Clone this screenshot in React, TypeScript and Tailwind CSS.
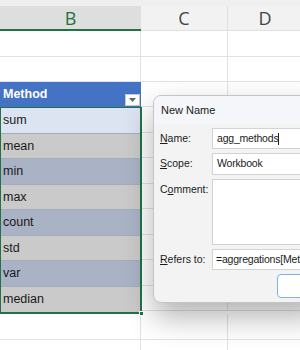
import React from 'react';

const ROWS: { label: string; bg: string; h: string }[] = [
  { label: 'sum', bg: 'bg-[#dce3f1]', h: 'h-[26px]' },
  { label: 'mean', bg: 'bg-[#cacaca]', h: 'h-[25px]' },
  { label: 'min', bg: 'bg-[#a9b3c5]', h: 'h-[26px]' },
  { label: 'max', bg: 'bg-[#cacaca]', h: 'h-[25px]' },
  { label: 'count', bg: 'bg-[#a9b3c5]', h: 'h-[26px]' },
  { label: 'std', bg: 'bg-[#cacaca]', h: 'h-[25px]' },
  { label: 'var', bg: 'bg-[#a9b3c5]', h: 'h-[26px]' },
  { label: 'median', bg: 'bg-[#cacaca]', h: 'h-[25px]' },
];

function BlankRow({ h }: { h: string }) {
  return (
    <div className={`flex ${h}`}>
      <div className="w-[141px] border-b border-r border-[#e2e2e2]" />
      <div className="w-[87px] border-b border-r border-[#e2e2e2]" />
      <div className="flex-1 border-b border-[#e2e2e2]" />
    </div>
  );
}

export default function App() {
  return (
    <div className="relative w-[300px] h-[350px] overflow-hidden bg-white font-['Liberation_Sans',Arial,sans-serif]">
      {/* top strip */}
      <div className="h-[6px] bg-[#efefef]" />

      {/* column headers */}
      <div className="flex h-[25px] font-['Open_Sans','Noto_Sans',sans-serif] text-[18px] leading-none">
        <div className="w-[141px] flex items-center justify-center bg-[#dedede] border-b-2 border-[#217346] text-[#217346]">B</div>
        <div className="w-[87px] flex items-center justify-center bg-[#f2f2f2] border-r border-b border-[#e0e0e0] text-[#444]">C</div>
        <div className="flex-1 flex items-center justify-center bg-[#f2f2f2] border-b border-[#e0e0e0] text-[#444] pl-[2px]">D</div>
      </div>

      <BlankRow h="h-[26px]" />
      <BlankRow h="h-[25px]" />

      {/* table header */}
      <div className="flex h-[25px]">
        <div className="w-[141px] relative flex items-center bg-[#4472c4] pl-[3px] text-white font-bold text-[12.5px]">
          Method
          <div className="absolute right-[1px] top-[12px] w-[15px] h-[12px] bg-white border border-[#c8c8c8] flex items-center justify-center">
            <svg width="7" height="4" viewBox="0 0 7 4"><path d="M0 0h7L3.5 4z" fill="#666" /></svg>
          </div>
        </div>
        <div className="w-[87px] border-b border-r border-[#e2e2e2]" />
        <div className="flex-1 border-b border-[#e2e2e2]" />
      </div>

      {/* table body */}
      <div className="flex">
        <div className="relative w-[142px] border-2 border-t border-[#217346] border-l-[1px]">
          {ROWS.map((r, i) => (
            <div
              key={r.label}
              className={`${r.h} ${r.bg} flex items-center pl-[2px] text-[12.5px] text-[#1a1a1a] ${i < ROWS.length - 1 ? 'border-b border-[#a5adbb]' : ''}`}
            >
              {r.label}
            </div>
          ))}
          <div className="absolute -right-[4px] -bottom-[4px] w-[5px] h-[5px] bg-[#217346] border border-white" />
        </div>
        <div className="w-[86px] flex flex-col">
          {ROWS.map(r => (
            <div key={r.label} className={`${r.h} border-b border-r border-[#e2e2e2]`} />
          ))}
        </div>
        <div className="flex-1 flex flex-col">
          {ROWS.map(r => (
            <div key={r.label} className={`${r.h} border-b border-[#e2e2e2]`} />
          ))}
        </div>
      </div>

      <BlankRow h="h-[26px]" />
      <BlankRow h="h-[26px]" />

      {/* New Name dialog */}
      <div className="absolute left-[153px] top-[95px] w-[170px] h-[208px] rounded-[8px] border border-[#c4c4c4] bg-[#f3f3f3] shadow-[0_14px_30px_rgba(0,0,0,0.3)] overflow-hidden text-[10.5px] text-[#1b1b1b]">
        <div className="h-[28px] bg-[#f4f6f9] flex items-center pl-[7px] text-[11px] pt-[1px]">New Name</div>
        <div className="flex flex-col gap-[4px] pt-[4px]">
          <div className="flex items-center h-[21px]">
            <div className="w-[58px] pl-[6px] whitespace-nowrap"><span className="underline">N</span>ame:</div>
            <div className="flex-1 h-full bg-white border border-[#d3d3d3] flex items-center pl-[4px] tracking-[-0.2px]">
              agg_methods<span className="inline-block w-[1px] h-[12px] bg-[#222]" />
            </div>
          </div>
          <div className="flex items-center h-[22px]">
            <div className="w-[58px] pl-[6px] whitespace-nowrap"><span className="underline">S</span>cope:</div>
            <div className="flex-1 h-full bg-white border border-[#d3d3d3] flex items-center pl-[4px] tracking-[-0.2px]">Workbook</div>
          </div>
          <div className="flex h-[66px]">
            <div className="w-[58px] pl-[6px] pt-[3px] whitespace-nowrap">C<span className="underline">o</span>mment:</div>
            <div className="flex-1 h-full bg-white border border-[#d3d3d3]" />
          </div>
          <div className="flex items-center h-[21px]">
            <div className="w-[58px] pl-[6px] whitespace-nowrap"><span className="underline">R</span>efers to:</div>
            <div className="flex-1 h-full bg-white border border-[#d3d3d3] flex items-center pl-[3px] whitespace-nowrap overflow-hidden tracking-[-0.2px]">
              =aggregations[Method]
            </div>
          </div>
          <div className="flex h-[24px]">
            <div className="ml-[123px] w-[50px] h-full rounded-[4px] bg-white border-[1.5px] border-[#7fb0e6]" />
          </div>
        </div>
      </div>
    </div>
  );
}
